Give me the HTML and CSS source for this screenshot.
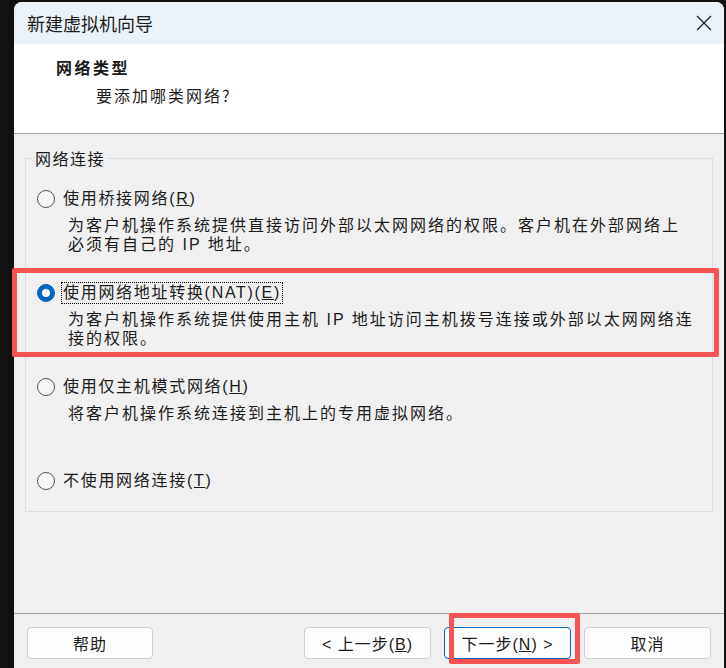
FILE: index.html
```html
<!DOCTYPE html>
<html lang="zh-CN">
<head>
<meta charset="utf-8">
<title>新建虚拟机向导</title>
<link rel="stylesheet" href="styles.css">
</head>
<body>
<div class="window">
  <div class="titlebar">
    <span class="title">新建虚拟机向导</span>
    <svg class="close" width="16" height="16" viewBox="0 0 16 16"><path d="M1 1 L15 15 M15 1 L1 15" stroke="#1b1b1b" stroke-width="1.2" fill="none"/></svg>
  </div>
  <div class="header">
    <div class="h-title">网络类型</div>
    <div class="h-sub">要添加哪类网络?</div>
  </div>
  <div class="body">
    <fieldset class="group">
      <legend>网络连接</legend>
      <div class="options">
        <div class="option">
          <div class="opt-row"><span class="radio"></span><span class="opt-label">使用桥接网络(<u>R</u>)</span></div>
          <div class="desc">为客户机操作系统提供直接访问外部以太网网络的权限。客户机在外部网络上<br>必须有自己的 IP 地址。</div>
        </div>
        <div class="option">
          <div class="opt-row"><span class="radio checked"></span><span class="opt-label focus">使用网络地址转换(NAT)(<u>E</u>)</span></div>
          <div class="desc">为客户机操作系统提供使用主机 IP 地址访问主机拨号连接或外部以太网网络连<br>接的权限。</div>
        </div>
        <div class="option">
          <div class="opt-row"><span class="radio"></span><span class="opt-label">使用仅主机模式网络(<u>H</u>)</span></div>
          <div class="desc">将客户机操作系统连接到主机上的专用虚拟网络。</div>
        </div>
        <div class="option last">
          <div class="opt-row"><span class="radio"></span><span class="opt-label">不使用网络连接(<u>T</u>)</span></div>
        </div>
      </div>
    </fieldset>
    <div class="footer">
      <button class="btn help">帮助</button>
      <button class="btn">&lt; 上一步(<u>B</u>)</button>
      <button class="btn primary">下一步(<u>N</u>) &gt;</button>
      <button class="btn">取消</button>
    </div>
  </div>
</div>
<div class="mark mark-nat"></div>
<div class="mark mark-next"></div>
</body>
</html>
```
FILE: styles.css
```css
* { box-sizing: border-box; }
html, body { margin: 0; padding: 0; }
body {
  width: 726px;
  height: 668px;
  background: #111111;
  position: relative;
  overflow: hidden;
  font-family: "Liberation Sans", "Noto Sans CJK SC", sans-serif;
  color: #1b1b1b;
}
.window {
  position: absolute;
  left: 14px;
  top: 2px;
  width: 710px;
  height: 666px;
  border-radius: 8px 8px 0 0;
  overflow: hidden;
  display: flex;
  flex-direction: column;
  background: #f0f0f0;
}
.titlebar {
  height: 42px;
  flex: none;
  background: #eaf2f8;
  display: flex;
  align-items: center;
  justify-content: space-between;
  padding: 0 12px 0 13px;
}
.title {
  font-family: "Noto Sans CJK SC", sans-serif;
  font-size: 18px;
  line-height: 24px;
  color: #1b1b1b;
}
.close { display: block; margin-top: -1px; }
.header {
  height: 90px;
  flex: none;
  background: #ffffff;
  border-bottom: 1px solid #a0a0a0;
  padding: 13px 0 0 42px;
}
.h-title {
  font-family: "Noto Sans CJK SC", sans-serif;
  font-weight: bold;
  font-size: 16px;
  letter-spacing: 2.5px;
  line-height: 20px;
}
.h-sub {
  margin: 8px 0 0 40px;
  font-family: "Noto Sans CJK SC", sans-serif;
  font-size: 16px;
  letter-spacing: 2px;
  line-height: 20px;
}
.body {
  flex: 1;
  display: flex;
  flex-direction: column;
  background: #f0f0f0;
}
.group {
  margin: 14px 11px 0 11px;
  border: 1px solid #dcdcdc;
  padding: 20px 0 19px 11px;
  min-width: 0;
}
.group legend {
  margin-left: -4px;
  padding: 0 2px;
  font-size: 16px;
  line-height: 20px;
  letter-spacing: 1.5px;
  font-family: "Noto Sans CJK SC", sans-serif;
}
.options {
  display: flex;
  flex-direction: column;
  gap: 28px;
}
.option { height: 66px; }
.option.last { height: 22px; }
.opt-row {
  display: flex;
  align-items: center;
  height: 22px;
}
.radio {
  width: 18px;
  height: 18px;
  border-radius: 50%;
  border: 1px solid #555555;
  background: #f7f7f7;
  flex: none;
  margin-right: 8px;
  position: relative;
}
.radio.checked {
  background: #0067c0;
  border-color: #0067c0;
}
.radio.checked::after {
  content: "";
  position: absolute;
  left: 4px;
  top: 4px;
  width: 8px;
  height: 8px;
  border-radius: 50%;
  background: #ffffff;
}
.opt-label {
  font-size: 16px;
  line-height: 20px;
  letter-spacing: 1.7px;
  padding: 0 0 0 1px;
  margin-left: -1px;
}
.opt-label.focus {
  outline: 1px dotted #000000;
  outline-offset: 0;
  padding: 0 1px 0 1px;
}
.desc {
  margin: 6px 0 0 31px;
  font-size: 16px;
  line-height: 19px;
  letter-spacing: 2px;
  white-space: nowrap;
}
.footer {
  margin-top: auto;
  border-top: 1px solid #a0a0a0;
  padding: 13px 13px 9px 13px;
  display: flex;
  gap: 13px;
}
.btn {
  width: 127px;
  height: 32px;
  border: 1px solid #d0d0d0;
  border-radius: 4px;
  background: #fdfdfd;
  font-family: "Liberation Sans", "Noto Sans CJK SC", sans-serif;
  font-size: 16px;
  letter-spacing: 1px;
  color: #1b1b1b;
  padding: 0;
}
.btn.help { width: 126px; margin-right: auto; }
.btn.primary { border-color: #0067c0; }
.mark {
  position: absolute;
  border: 5px solid #f65454;
  border-radius: 2px;
}
.mark-nat {
  left: 12px;
  top: 268px;
  width: 707px;
  height: 89px;
}
.mark-next {
  left: 449px;
  top: 613px;
  width: 131px;
  height: 51px;
}
```
